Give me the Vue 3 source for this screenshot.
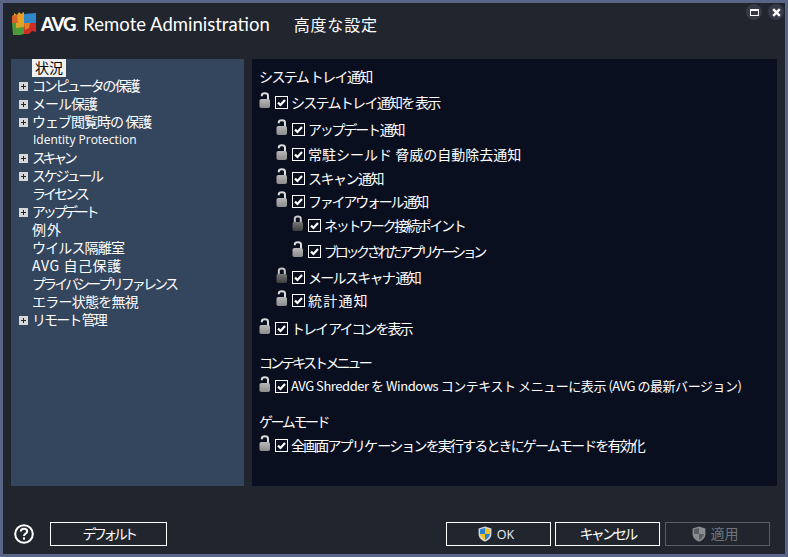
<script setup>
const tree = [
  { t: '状況', sel: true },
  { t: 'コンピュータの 保護', plus: true, ls: -2.3 },
  { t: 'メール保護', plus: true, ls: -1 },
  { t: 'ウェブ閲覧時の 保護', plus: true, ls: -1 },
  { t: 'Identity Protection', latin: true },
  { t: 'スキャン', plus: true, ls: -3.4 },
  { t: 'スケジュール', plus: true, ls: -2.2 },
  { t: 'ライセンス', ls: -3 },
  { t: 'アップデート', plus: true, ls: -3.3 },
  { t: '例外', ls: 1 },
  { t: 'ウイルス隔離室', ls: -0.85 },
  { t: 'AVG 自己保護', ls: 0.6 },
  { t: 'プライバシー プリファレンス', ls: -2.9 },
  { t: 'エラー状態を無視', ls: -0.75 },
  { t: 'リモート 管理', plus: true, ls: -1.9 }
]
const rows = [
  { head: true, t: 'システム トレイ通知', h: 20, ls: -1.6 },
  { t: 'システムトレイ通知を 表示', lvl: 0, h: 26, ls: -1.7 },
  { t: 'アップデート 通知', lvl: 1, h: 27, ls: -2.2 },
  { t: '常駐シールド 脅威の自動除去通知', lvl: 1, h: 25, ls: 0 },
  { t: 'スキャン通知', lvl: 1, h: 24, ls: -1.5 },
  { t: 'ファイアウォール 通知', lvl: 1, h: 23, ls: -2.2 },
  { t: 'ネットワーク接続ポイント', lvl: 2, h: 24, ls: -2.3, closed: true },
  { t: 'ブロックされたアプリケ ーション', lvl: 2, h: 26, ls: -3.3 },
  { t: 'メールスキャナ 通知', lvl: 1, h: 26, ls: -1.7, closed: true },
  { t: '統計通知', lvl: 1, h: 23, ls: 1.2 },
  { t: 'トレイ アイコンを表示', lvl: 0, h: 28, ls: -2 },
  { head: true, t: 'コンテキスト メニュー', h: 34, ls: -2.9 },
  { t: 'AVG Shredder を Windows コンテキスト メニューに表示 (AVG の最新バージョン)', lvl: 0, h: 24, ls: -0.45, small: true },
  { head: true, t: 'ゲームモード', h: 35, ls: -2.4 },
  { t: '全画面アプリケ ーションを実行するときにゲームモードを有効化', lvl: 0, h: 24, ls: -1.85 }
]
</script>

<template>
  <div class="window">
    <header class="titlebar">
      <svg class="logo" width="25" height="24" viewBox="0 0 25 24">
        <path d="M0 4 L2 3 V1 L5 3 L7 0 L9 2 L12 0 V11 H0Z" fill="#e8a020" />
        <path d="M0 4 L5 3 L6 11 H0Z" fill="#d8632a" />
        <path d="M12 2 L24 1 V11 H12Z" fill="#2f86c8" />
        <path d="M0 11 H12 V22 L8 23 L1 23Z" fill="#4d9a3a" />
        <path d="M12 11 H24 V20 L20 19 L17 22 L12 22Z" fill="#cf2d23" />
        <path d="M4 11 H12 V15 L4 16Z" fill="#d9a62a" />
        <path d="M12 11 L18 11 L17 16 L13 18Z" fill="#e0812a" />
      </svg>
      <span class="brand"><b>AVG</b><i>.</i> Remote Administration</span>
      <span class="page-title">高度な設定</span>
      <div class="win-buttons">
        <span class="win-btn"><span class="max-glyph"></span></span>
        <span class="win-btn">
          <svg width="9" height="9" viewBox="0 0 9 9"><path d="M1.2 1.2 L7.8 7.8 M7.8 1.2 L1.2 7.8" stroke="#fff" stroke-width="2.4" /></svg>
        </span>
      </div>
    </header>

    <main class="panels">
      <nav class="tree">
        <div v-for="item in tree" :key="item.t" class="tree-row">
          <span class="plus-slot">
            <span v-if="item.plus" class="plus"></span>
          </span>
          <span
            :class="['tree-label', { selected: item.sel, latin: item.latin }]"
            :style="{ letterSpacing: (item.ls || 0) + 'px' }"
          >{{ item.t }}</span>
        </div>
      </nav>

      <section class="settings">
        <div
          v-for="r in rows"
          :key="r.t"
          :class="['row', r.head ? 'head' : 'lvl' + r.lvl, { small: r.small }]"
          :style="{ height: r.h + 'px' }"
        >
          <template v-if="!r.head">
            <svg class="lock" width="12" height="17" viewBox="0 0 12 17"><use :href="r.closed ? '#closed-lock' : '#open-lock'" /></svg>
            <span class="check"><svg width="11" height="11" viewBox="0 0 11 11"><path d="M2 5.6 L4.5 8 L9 3" fill="none" stroke="#fff" stroke-width="2.2" /></svg></span>
          </template>
          <span class="row-text" :style="{ letterSpacing: r.ls + 'px' }">{{ r.t }}</span>
        </div>
      </section>
    </main>

    <footer class="footer">
      <svg class="help" width="22" height="22" viewBox="0 0 22 22">
        <circle cx="11" cy="11" r="8.8" fill="none" stroke="#fff" stroke-width="2" />
        <path d="M7.8 8.6 C7.8 4.9 14.2 4.9 14.2 8.6 C14.2 10.8 11 10.6 11 13" fill="none" stroke="#fff" stroke-width="2" />
        <rect x="10" y="14.4" width="2" height="2.2" fill="#fff" />
      </svg>
      <button class="btn default-btn">デフォルト</button>
      <div class="spacer"></div>
      <button class="btn action with-icon">
        <svg width="14" height="16" viewBox="0 0 14 16">
          <path d="M7 .6 L13.4 2.4 V8 C13.4 12 10 14.6 7 15.6 C4 14.6 .6 12 .6 8 V2.4Z" fill="#d8d8d8" />
          <path d="M7 2 V8 H2 V3.2Z" fill="#2c7fd0" />
          <path d="M7 2 L12 3.2 V8 H7Z" fill="#f2c21c" />
          <path d="M2 8 H7 V14 C4.6 13 2.4 11 2 8Z" fill="#f2c21c" />
          <path d="M7 8 H12 C11.6 11 9.4 13 7 14Z" fill="#2c7fd0" />
        </svg>
        <span class="ok">OK</span>
      </button>
      <button class="btn action cancel">キャンセル</button>
      <button class="btn action disabled with-icon">
        <svg width="14" height="16" viewBox="0 0 14 16">
          <path d="M7 .6 L13.4 2.4 V8 C13.4 12 10 14.6 7 15.6 C4 14.6 .6 12 .6 8 V2.4Z" fill="#8a8d90" />
          <path d="M7 2 V8 H2 V3.2Z" fill="#5c5f62" />
          <path d="M7 8 H12 C11.6 11 9.4 13 7 14Z" fill="#5c5f62" />
        </svg>
        <span>適用</span>
      </button>
    </footer>

    <svg width="0" height="0" class="defs">
      <defs>
        <linearGradient id="lock-body" x1="0" y1="0" x2="0" y2="1">
          <stop offset="0" stop-color="#b8b8b8" />
          <stop offset="1" stop-color="#8c8c8c" />
        </linearGradient>
        <linearGradient id="lock-dark" x1="0" y1="0" x2="0" y2="1">
          <stop offset="0" stop-color="#777" />
          <stop offset="1" stop-color="#3e3e3e" />
        </linearGradient>
        <g id="open-lock">
          <path d="M2.8 4.2 V3.4 C2.8 .4 9 .4 9 3.4 V8" fill="none" stroke="#dcdcdc" stroke-width="2" />
          <rect x="0.5" y="7" width="10.5" height="9" rx="1.8" fill="url(#lock-body)" />
        </g>
        <g id="closed-lock">
          <path d="M2.8 8 V3.8 C2.8 .6 8.8 .6 8.8 3.8 V8" fill="none" stroke="#c8c8c8" stroke-width="2" />
          <rect x="0.5" y="7" width="10.5" height="9" rx="1.8" fill="url(#lock-dark)" />
        </g>
      </defs>
    </svg>
  </div>
</template>

<style>
html, body { margin: 0; background: #20252e; }
</style>

<style scoped>
.window {
  box-sizing: border-box;
  width: 788px;
  height: 557px;
  border: 3px solid #5a6487;
  background: #20252e;
  color: #fff;
  font-family: "Noto Sans CJK JP", "Noto Sans", sans-serif;
  font-size: 14px;
  display: flex;
  flex-direction: column;
  overflow: hidden;
  position: relative;
}
.titlebar {
  height: 56px;
  flex: none;
  display: flex;
  align-items: flex-start;
  padding: 9px 0 0 9px;
  box-sizing: border-box;
  position: relative;
}
.logo { flex: none; }
.brand {
  margin-left: 4px;
  font-family: Lato, "Open Sans", sans-serif;
  font-size: 18.5px;
  line-height: 24px;
  white-space: nowrap;
}
.brand b { font-weight: 900; letter-spacing: -1.2px; margin-right: 1px; }
.brand i { font-style: normal; font-size: 10px; }
.page-title {
  margin-left: 24px;
  font-size: 16px;
  line-height: 24px;
  letter-spacing: 0.8px;
}
.win-buttons {
  position: absolute;
  top: 1px;
  right: 1px;
  display: flex;
  gap: 6px;
}
.win-btn {
  width: 16px;
  height: 16px;
  border-radius: 50%;
  background: #353a46;
  display: flex;
  align-items: center;
  justify-content: center;
}
.max-glyph {
  width: 7px;
  height: 4px;
  border: 1px solid #fff;
  border-top-width: 2px;
}
.panels {
  display: flex;
  gap: 8px;
  height: 427px;
  flex: none;
  padding: 0 8px;
}
.tree {
  width: 233px;
  flex: none;
  background: #34465e;
  box-sizing: border-box;
}
.tree-row {
  height: 18px;
  display: flex;
  align-items: flex-start;
  white-space: nowrap;
}
.plus-slot {
  width: 21px;
  height: 18px;
  flex: none;
  display: flex;
  align-items: center;
  justify-content: center;
  padding-left: 3px;
  box-sizing: border-box;
}
.plus {
  width: 9px;
  height: 9px;
  background:
    linear-gradient(#222, #222) center / 5px 1px no-repeat,
    linear-gradient(#222, #222) center / 1px 5px no-repeat,
    #d8d8d8;
}
.tree-label { line-height: 16px; }
.tree-label.latin {
  font-family: "Open Sans", sans-serif;
  font-size: 12px;
  line-height: 18px;
  margin-left: 1px;
}
.selected {
  background: #f0f0f0;
  color: #000;
  padding: 0 3px;
  line-height: 17px;
  height: 18px;
}
.settings {
  flex: 1;
  background: #0a0f1f;
  padding: 7px 0 0 7px;
  min-width: 0;
}
.row {
  display: flex;
  align-items: flex-end;
  white-space: nowrap;
  box-sizing: border-box;
}
.row-text { line-height: 20px; }
.small { font-size: 13px; }
.lvl0 { padding-left: 0; }
.lvl1 { padding-left: 17px; }
.lvl2 { padding-left: 33px; }
.lock { flex: none; margin-bottom: 3px; }
.check {
  flex: none;
  width: 11px;
  height: 11px;
  border: 1px solid #fff;
  margin: 0 3px 3px 4px;
  display: flex;
}
.footer {
  flex: 1;
  display: flex;
  align-items: flex-start;
  padding: 36px 15px 0 10px;
}
.help { flex: none; margin-right: 15px; margin-top: 1px; }
.btn {
  height: 24px;
  box-sizing: border-box;
  background: transparent;
  border: 1px solid #fff;
  color: #fff;
  font: inherit;
  display: flex;
  align-items: center;
  justify-content: center;
  gap: 5px;
  padding: 0 0 3px;
}
.default-btn { width: 117px; letter-spacing: -3.6px; }
.cancel { letter-spacing: -2.8px; }
.spacer { flex: 1; }
.action { width: 105px; margin-left: 4px; }
.with-icon { padding-right: 5px; }
.with-icon svg { margin-top: 3px; }
.ok {
  font-family: "Open Sans", sans-serif;
  font-size: 12.5px;
  color: #eaf4ff;
  margin-top: 3px;
}
.disabled {
  border-color: #5a5e66;
  color: #70757c;
  margin-left: 5px;
}
.defs { position: absolute; }
</style>
